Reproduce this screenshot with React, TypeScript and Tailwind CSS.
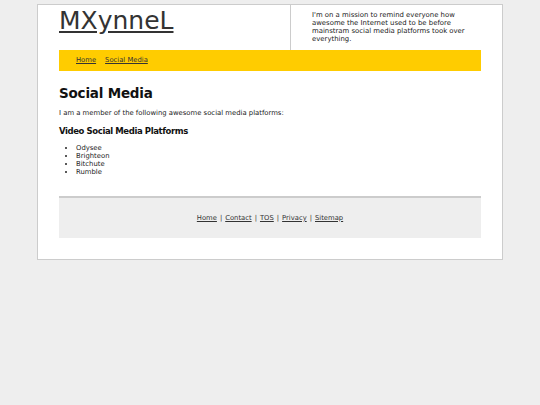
export default function App() {
  const footerLinks = ["Home", "Contact", "TOS", "Privacy", "Sitemap"];
  const platforms = ["Odysee", "Brighteon", "Bitchute", "Rumble"];

  return (
    <div
      className="min-h-[405px] bg-[#eeeeee] pt-[4px] text-[#111]"
      style={{ fontFamily: '"DejaVu Sans", Verdana, sans-serif' }}
    >
      <div className="mx-auto w-[466px] border border-[#cccccc] bg-white px-[21px] pb-[21px]">
        {/* header */}
        <div className="flex h-[45px]">
          <div className="w-[231px] pt-[1px]">
            <a href="#" className="text-[25px] leading-[30px] text-[#333] underline">
              MXynneL
            </a>
          </div>
          <div className="flex-1 border-l border-[#cccccc] pl-[21px] pt-[6px] text-[6.9px] leading-[8px] text-[#222]">
            I'm on a mission to remind everyone how awesome the Internet used to be before
            mainstram social media platforms took over everything.
          </div>
        </div>

        {/* nav */}
        <nav className="flex h-[21px] items-center gap-[9px] bg-[#ffcc00] pl-[17px] text-[6.8px] text-[#333]">
          <a href="#" className="underline">Home</a>
          <a href="#" className="underline">Social Media</a>
        </nav>

        {/* content */}
        <main className="pt-[14px] pb-[20px]">
          <h1 className="text-[13.5px] font-bold leading-[16px] tracking-[-0.2px]">Social Media</h1>
          <p className="mt-[8px] text-[6.85px] leading-[9px] text-[#222]">
            I am a member of the following awesome social media platforms:
          </p>
          <h3 className="mt-[8px] text-[8.5px] font-bold leading-[11px] tracking-[-0.4px]">
            Video Social Media Platforms
          </h3>
          <ul className="mt-[7px] list-disc pl-[17px] text-[6.85px] leading-[8px] text-[#222]">
            {platforms.map((p) => (
              <li key={p}>{p}</li>
            ))}
          </ul>
        </main>

        {/* footer */}
        <footer className="flex h-[42px] items-center justify-center border-t-2 border-[#cccccc] bg-[#eeeeee] text-[6.8px] text-[#333]">
          {footerLinks.map((l, i) => (
            <span key={l}>
              {i > 0 && <span className="px-[3px]">|</span>}
              <a href="#" className="underline">{l}</a>
            </span>
          ))}
        </footer>
      </div>
    </div>
  );
}
